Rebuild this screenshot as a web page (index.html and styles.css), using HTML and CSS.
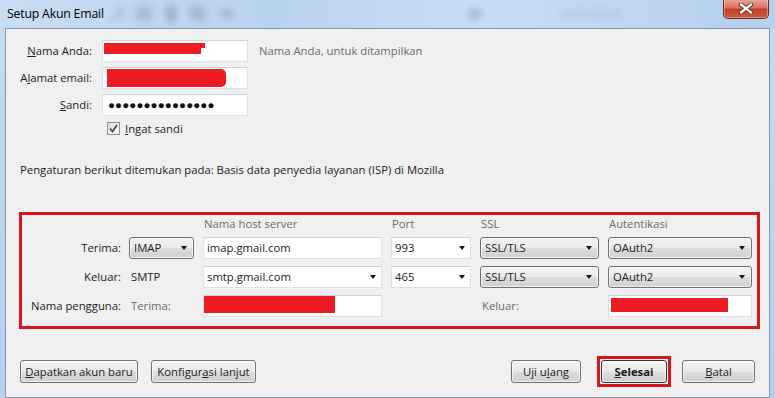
FILE: index.html
```html
<!DOCTYPE html>
<html lang="id">
<head>
    <meta charset="UTF-8">
    <meta name="viewport" content="width=device-width, initial-scale=1.0">
    <title>Setup Akun Email</title>
    <link rel="stylesheet" href="styles.css">
</head>
<body>

    <div class="window">
        <!-- Title bar -->
        <div class="titlebar">
            <span class="title">Setup Akun Email</span>
            <div class="ghosts">
                <i class="g-pen"></i><i class="g-sq"></i><i class="g-stack"></i><i class="g-sq"></i><i class="g-eye"></i>
            </div>
            <div class="ghosts ghosts-right">
                <i class="g-x"></i><i class="g-text"></i>
            </div>
            <button class="close-btn" title="Tutup">
                <svg width="16" height="11" viewBox="0 0 16 11">
                    <path d="M3 1.5 L13 9.5 M13 1.5 L3 9.5" stroke="#5b2a22" stroke-width="4.2" stroke-linecap="round"/>
                    <path d="M3 1.5 L13 9.5 M13 1.5 L3 9.5" stroke="#fff" stroke-width="2.4" stroke-linecap="round"/>
                </svg>
            </button>
        </div>

        <div class="client">
            <!-- Identity -->
            <div class="identity">
                <label class="lbl"><u>N</u>ama Anda:</label>
                <div class="textbox"><span class="redact redact-name"></span></div>
                <span class="hint">Nama Anda, untuk ditampilkan</span>

                <label class="lbl">A<u>l</u>amat email:</label>
                <div class="textbox"><span class="redact redact-mail"></span></div>
                <span></span>

                <label class="lbl"><u>S</u>andi:</label>
                <div class="textbox password">&#9679;&#9679;&#9679;&#9679;&#9679;&#9679;&#9679;&#9679;&#9679;&#9679;&#9679;&#9679;&#9679;&#9679;&#9679;</div>
                <span></span>

                <span></span>
                <label class="check">
                    <span class="checkbox">
                        <svg width="9" height="9" viewBox="0 0 9 9"><path d="M1 4.5 L3.5 7.5 L8 1" fill="none" stroke="#3a4a6a" stroke-width="1.8"/></svg>
                    </span>
                    <span><u>I</u>ngat sandi</span>
                </label>
                <span></span>
            </div>

            <p class="found">Pengaturan berikut ditemukan pada: Basis data penyedia layanan (ISP) di Mozilla</p>

            <!-- Server settings -->
            <div class="server-box">
                <span></span><span></span>
                <span class="head">Nama host server</span>
                <span class="head">Port</span>
                <span class="head">SSL</span>
                <span class="head">Autentikasi</span>

                <span class="lbl">Terima:</span>
                <div class="dropdown">IMAP<i class="arrow"></i></div>
                <div class="textbox">imap.gmail.com</div>
                <div class="textbox combo">993<i class="arrow"></i></div>
                <div class="dropdown">SSL/TLS<i class="arrow"></i></div>
                <div class="dropdown">OAuth2<i class="arrow"></i></div>

                <span class="lbl">Keluar:</span>
                <span class="plain">SMTP</span>
                <div class="textbox combo">smtp.gmail.com<i class="arrow"></i></div>
                <div class="textbox combo">465<i class="arrow"></i></div>
                <div class="dropdown">SSL/TLS<i class="arrow"></i></div>
                <div class="dropdown">OAuth2<i class="arrow"></i></div>

                <span class="lbl">Nama pengguna:</span>
                <span class="plain muted">Terima:</span>
                <div class="textbox"><span class="redact redact-in"></span></div>
                <span></span>
                <span class="plain muted">Keluar:</span>
                <div class="textbox"><span class="redact redact-out"></span></div>
            </div>

            <!-- Buttons -->
            <div class="actions">
                <div class="group">
                    <button class="btn btn-new"><u>D</u>apatkan akun baru</button>
                    <button class="btn btn-adv">Konfigur<u>a</u>si lanjut</button>
                </div>
                <div class="group group-right">
                    <button class="btn btn-retest">Uji u<u>l</u>ang</button>
                    <div class="highlight">
                        <button class="btn btn-default"><u>S</u>elesai</button>
                    </div>
                    <button class="btn btn-cancel"><u>B</u>atal</button>
                </div>
            </div>
        </div>
    </div>

</body>
</html>
```

FILE: styles.css
```css
body {
    margin: 0;
    font-family: "Open Sans", "Noto Sans", sans-serif;
    font-size: 11.3px;
    color: #1b1b1b;
    background-color: #b3cdec;
}

u {
    text-decoration: underline;
    text-underline-offset: 1px;
}

.window {
    width: 775px;
    height: 398px;
    display: flex;
    flex-direction: column;
    background: linear-gradient(to bottom, #c6dbf2 0%, #b6cfed 100%);
    overflow: hidden;
}

/* Title bar */
.titlebar {
    height: 28px;
    display: flex;
    align-items: center;
    background: linear-gradient(to right, #c9ddf3 0%, #b9d2ef 35%, #c8ddf4 62%, #b5cfee 100%);
}

.title {
    margin-left: 7px;
    font-size: 12.3px;
    color: #000;
    letter-spacing: -0.2px;
}

.ghosts {
    display: flex;
    align-items: center;
    gap: 14px;
    margin-left: 12px;
    filter: blur(3.5px);
    opacity: 0.45;
}

.ghosts i {
    display: block;
    background-color: #6f7e92;
}

.g-pen { width: 6px; height: 16px; transform: rotate(40deg); opacity: 0.6; }
.g-sq { width: 16px; height: 15px; opacity: 0.7; }
.g-stack { width: 10px; height: 16px; }
.g-eye { width: 14px; height: 7px; border-radius: 50%; }

.ghosts-right {
    margin-left: 235px;
    gap: 80px;
}

.g-x { width: 12px; height: 12px; transform: rotate(45deg); opacity: 0.8; }
.g-text { width: 60px; height: 5px; opacity: 0.4; }

.close-btn {
    margin-left: auto;
    margin-right: 6px;
    align-self: flex-start;
    margin-top: -1px;
    width: 46px;
    height: 20px;
    border: 1px solid #5e2f2a;
    border-top: none;
    border-radius: 0 0 5px 5px;
    background: linear-gradient(to bottom, #e9a899 0%, #d9735f 45%, #c2402b 55%, #cf5a3f 100%);
    box-shadow: inset 0 0 0 1px rgba(255,255,255,0.35);
    display: flex;
    justify-content: center;
    align-items: center;
    padding: 0;
}

/* Client area */
.client {
    margin: 0 5px;
    height: 364px;
    border: 1px solid #8596ad;
    background-color: #f0f0f0;
    padding: 11px 14px 0 14px;
    display: flex;
    flex-direction: column;
}

.identity {
    display: grid;
    grid-template-columns: 72px 146px 1fr;
    grid-template-rows: 22px 22px 22px 16px;
    column-gap: 10px;
    row-gap: 5px;
    align-items: center;
}

.lbl {
    text-align: right;
    white-space: nowrap;
}

.hint {
    margin-left: 1px;
    color: #6a6a6a;
}

.textbox {
    height: 22px;
    box-sizing: border-box;
    background-color: #fff;
    border: 1px solid #dde1e6;
    border-top-color: #cfd3d8;
    display: flex;
    align-items: center;
    padding-left: 3px;
    position: relative;
    white-space: nowrap;
}

.password {
    padding-left: 5px;
    font-size: 11.6px;
    letter-spacing: 0.1px;
    color: #111;
}

.redact {
    display: block;
    background-color: #ed1c24;
}

.redact-name {
    width: 97px;
    height: 11px;
    margin-left: -2px;
    align-self: flex-start;
    margin-top: 2px;
    position: relative;
}

.redact-name::after {
    content: "";
    position: absolute;
    right: -4px;
    top: 0;
    width: 4px;
    height: 5px;
    background-color: #ed1c24;
}

.redact-mail {
    width: 119px;
    height: 18px;
    margin-left: 1px;
    border-radius: 0 5px 5px 0;
}

.redact-in {
    width: 131px;
    height: 17px;
    margin-left: -3px;
    align-self: flex-start;
}

.redact-out {
    width: 117px;
    height: 14px;
    margin-left: -1px;
    align-self: flex-start;
    margin-top: 2px;
}

.check {
    display: flex;
    align-items: center;
    gap: 5px;
    margin-left: 5px;
}

.checkbox {
    width: 11px;
    height: 11px;
    border: 1px solid #8e8f8f;
    background: linear-gradient(135deg, #dcdcdc, #fbfbfb);
    display: flex;
    align-items: center;
    justify-content: center;
}

.found {
    margin: 25px 0 0 0;
    line-height: 15px;
}

/* Server box */
.server-box {
    margin: 35px -5px 0 -1px;
    border: 3px solid #d8141c;
    padding: 2px 5px 9px 0;
    display: grid;
    grid-template-columns: 98px 65px 179px 80px 119px 144px;
    grid-template-rows: 13px 22px 22px 22px;
    column-gap: 9px;
    row-gap: 7px;
    align-items: center;
}

.head {
    color: #6a6a6a;
    padding-left: 1px;
    line-height: 13px;
}

.server-box .lbl {
    margin-right: -1px;
}

.plain {
    padding-left: 2px;
}

.muted {
    color: #6a6a6a;
}

.dropdown {
    height: 22px;
    box-sizing: border-box;
    border: 1px solid #707070;
    border-radius: 3px;
    background: linear-gradient(to bottom, #f3f3f3 0%, #ebebeb 48%, #dddddd 52%, #d0d0d0 100%);
    box-shadow: inset 0 0 0 1px rgba(255,255,255,0.7);
    display: flex;
    align-items: center;
    padding-left: 4px;
    position: relative;
}

.arrow {
    position: absolute;
    right: 6px;
    top: 8px;
    width: 0;
    height: 0;
    border-left: 3.5px solid transparent;
    border-right: 3.5px solid transparent;
    border-top: 4px solid #111;
}

.combo .arrow {
    right: 5px;
    top: 8px;
}

/* Bottom buttons */
.actions {
    margin-top: 27px;
    display: flex;
    justify-content: space-between;
    align-items: center;
}

.group {
    display: flex;
    align-items: center;
    gap: 13px;
}

.group-right {
    gap: 0;
}

.btn {
    height: 23px;
    box-sizing: border-box;
    font-family: inherit;
    font-size: 11.3px;
    color: #1b1b1b;
    border: 1px solid #707070;
    border-radius: 3px;
    background: linear-gradient(to bottom, #f2f2f2 0%, #ebebeb 48%, #dddddd 52%, #cfcfcf 100%);
    box-shadow: inset 0 0 0 1px rgba(255,255,255,0.7);
    padding: 0;
    cursor: pointer;
}

.btn-new { width: 118px; }
.btn-adv { width: 105px; }
.btn-retest { width: 70px; margin-right: 16px; }

.highlight {
    border: 3px solid #d8141c;
    padding: 1px;
    margin-right: 11px;
}

.btn-default {
    width: 66px;
    font-weight: bold;
    border-color: #333;
}

.btn-cancel { width: 73px; }
```
